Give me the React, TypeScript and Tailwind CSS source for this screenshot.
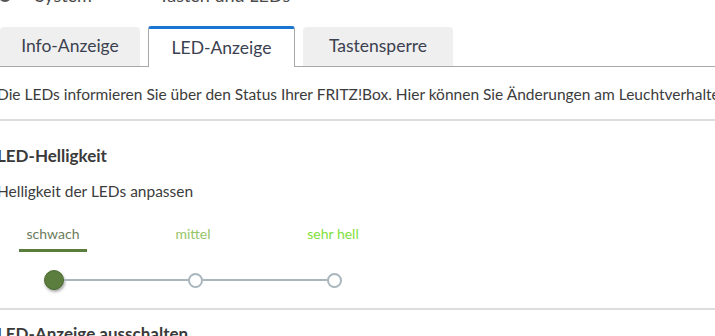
import React from 'react';

const font = { fontFamily: 'Lato, "Noto Sans", sans-serif' };

const Tab = ({ label, active, width }: { label: string; active?: boolean; width: string }) =>
  active ? (
    <div
      className={`${width} h-[41px] -mb-px bg-white border-t-[3px] border-x border-[#1a76d2] border-x-[#a8a8a8] rounded-t-[3px] flex items-center justify-center text-[17.5px] text-[#3b4150]`}
    >
      {label}
    </div>
  ) : (
    <div
      className={`${width} h-[39px] bg-[#efefef] rounded-t-[4px] flex items-center justify-center text-[17.5px] text-[#3b4150]`}
    >
      {label}
    </div>
  );

export default function App() {
  return (
    <div className="w-[715px] h-[336px] overflow-hidden bg-white text-[#3c3c3c]" style={font}>
      {/* Breadcrumb (cut off at top) */}
      <div className="h-[27px] flex flex-col">
        <div className="h-[20px] -mt-[15px] flex items-center text-[18px] text-[#4a4a4a] whitespace-nowrap">
          <svg width="14" height="18" viewBox="0 0 14 18" className="-ml-[2px]">
            <circle cx="7" cy="9" r="6" fill="none" stroke="#555" strokeWidth="1.8" />
          </svg>
          <span className="ml-[23px]">System</span>
          <span className="ml-[28px] text-[15px]">&gt;</span>
          <span className="ml-[30px]">Tasten und LEDs</span>
        </div>
      </div>

      {/* Tabs */}
      <div className="flex items-end gap-[8px] border-b border-[#a8a8a8] h-[39px] box-content">
        <Tab label="Info-Anzeige" width="w-[140px]" />
        <Tab label="LED-Anzeige" width="w-[147px]" active />
        <Tab label="Tastensperre" width="w-[150px]" />
      </div>

      <div className="-ml-[3px]">
        <div className="h-[52px] pt-[4px] flex items-center text-[15.5px] whitespace-nowrap">
          Die LEDs informieren Sie über den Status Ihrer FRITZ!Box. Hier können Sie Änderungen am Leuchtverhalten vornehmen.
        </div>
        <div className="border-t-2 border-[#dddddd]" />

        <div className="h-[37px] mt-[15px] pt-[2px] flex items-center text-[17px] font-bold text-[#3a3a3a]">
          LED-Helligkeit
        </div>
        <div className="h-[36px] pt-[2px] flex items-center text-[15.5px]">Helligkeit der LEDs anpassen</div>

        {/* Slider labels */}
        <div className="flex -ml-[14px] mt-[14px] text-[14px]">
          <div className="w-[140px] flex flex-col items-center">
            <span className="h-[22px] text-[#6c7c5c]">schwach</span>
            <span className="mt-[4px] w-[68px] h-[3px] bg-[#5b7d3c]" />
          </div>
          <div className="w-[140px] flex flex-col items-center">
            <span className="h-[22px] text-[#96c468]">mittel</span>
          </div>
          <div className="w-[140px] flex flex-col items-center">
            <span className="h-[22px] text-[#7fe03c]">sehr hell</span>
          </div>
        </div>

        {/* Slider track */}
        <div className="flex items-center w-[298px] ml-[47px] mt-[18px] h-[20px]">
          <span className="w-[20px] h-[20px] rounded-full bg-[#5b7e3e] border border-[#4b6b31] shadow-[1px_2px_3px_rgba(0,0,0,0.35)] shrink-0" />
          <span className="flex-1 h-[2px] bg-[#a9b6bc]" />
          <span className="w-[15px] h-[15px] rounded-full bg-white border-2 border-[#a9b6bc] shrink-0" />
          <span className="flex-1 h-[2px] bg-[#a9b6bc]" />
          <span className="w-[15px] h-[15px] rounded-full bg-white border-2 border-[#a9b6bc] shrink-0" />
        </div>

        <div className="mt-[18px] border-t-2 border-[#dddddd]" />
        <div className="h-[36px] mt-[6px] flex items-center text-[17px] font-bold text-[#3a3a3a]">
          LED-Anzeige ausschalten
        </div>
      </div>
    </div>
  );
}
